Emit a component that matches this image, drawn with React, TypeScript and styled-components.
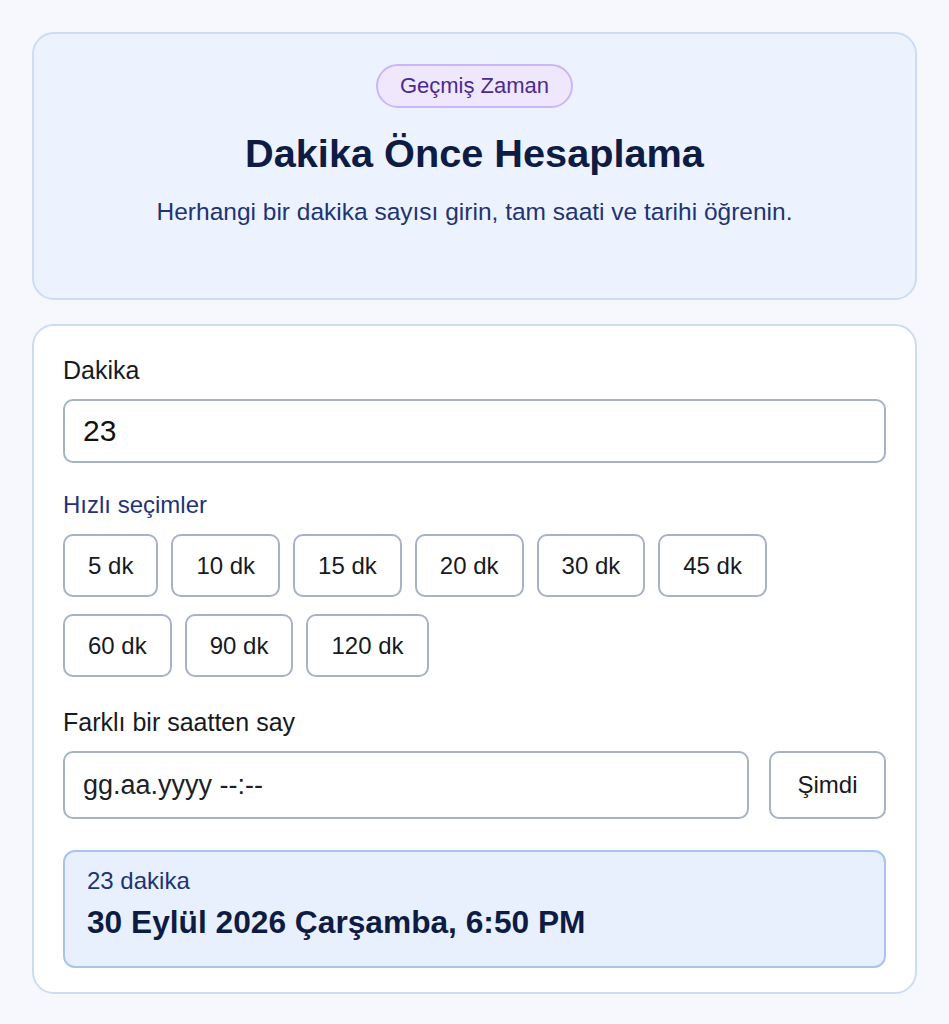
import React, { useState } from "react"
import styled, { createGlobalStyle } from "styled-components"

const GlobalStyle = createGlobalStyle`
    * {
        box-sizing: border-box;
    }
    body {
        margin: 0;
        background: #f6f8fd;
        font-family: "Liberation Sans", Arial, sans-serif;
        color: #111827;
    }
`

const StyledPage = styled.main`
    display: flex;
    flex-direction: column;
    gap: 24px;
    padding: 32px 32px 32px;
`

const StyledHero = styled.section`
    display: flex;
    flex-direction: column;
    align-items: center;
    background: #edf3fe;
    border: 2px solid #cddcf3;
    border-radius: 22px;
    padding: 30px 32px 70px;
    text-align: center;
`

const StyledBadge = styled.span`
    display: inline-flex;
    align-items: center;
    height: 44px;
    padding: 0 22px;
    border-radius: 999px;
    background: #efe8fd;
    border: 2px solid #cbb6f9;
    color: #4c2a92;
    font-size: 22px;
`

const StyledTitle = styled.h1`
    margin: 21px 0 0;
    font-size: 39.7px;
    line-height: 48px;
    font-weight: 700;
    color: #0e1c44;
`

const StyledSubtitle = styled.p`
    margin: 19px 0 0;
    font-size: 24.5px;
    line-height: 32px;
    color: #1f3376;
`

const StyledCard = styled.section`
    display: flex;
    flex-direction: column;
    background: #ffffff;
    border: 2px solid #cddcf3;
    border-radius: 22px;
    padding: 27px 29px 24px;
`

const StyledLabel = styled.label<{ $accent?: boolean }>`
    display: block;
    font-size: ${({ $accent }) => ($accent ? "24px" : "25px")};
    line-height: 34px;
    color: ${({ $accent }) => ($accent ? "#1f3376" : "#161a22")};
    margin-bottom: 12px;
`

const StyledInput = styled.input<{ $large?: boolean }>`
    width: 100%;
    height: ${({ $large }) => ($large ? "68px" : "64px")};
    border: 2px solid #a7b1c7;
    border-radius: 10px;
    padding: 0 18px;
    font-family: "Liberation Sans", Arial, sans-serif;
    font-size: ${({ $large }) => ($large ? "27px" : "30px")};
    color: #111;
    background: #fff;
    outline: none;
    &::placeholder {
        color: #1c1f26;
        opacity: 1;
    }
`

const StyledSection = styled.div<{ $gap: number }>`
    margin-top: ${({ $gap }) => $gap}px;
`

const StyledChips = styled.div`
    display: flex;
    flex-wrap: wrap;
    column-gap: 13px;
    row-gap: 17px;
    max-width: 760px;
`

const StyledChip = styled.button`
    height: 63px;
    padding: 0 23px;
    border: 2px solid #a7b1c7;
    border-radius: 10px;
    background: #fff;
    font-family: "Liberation Sans", Arial, sans-serif;
    font-size: 24px;
    color: #161a22;
    cursor: pointer;
`

const StyledRow = styled.div`
    display: flex;
    gap: 20px;
`

const StyledNowButton = styled(StyledChip)`
    height: 68px;
    flex: 0 0 117px;
    padding: 0;
`

const StyledResult = styled.div`
    margin-top: 31px;
    background: #e8f0fd;
    border: 2px solid #a9c3ef;
    border-radius: 12px;
    padding: 15px 22px 25px;
`

const StyledResultLabel = styled.div`
    font-size: 24px;
    line-height: 28px;
    color: #1f3376;
`

const StyledResultValue = styled.div`
    margin-top: 8px;
    font-size: 31.7px;
    line-height: 38px;
    font-weight: 700;
    color: #0e1c44;
`

const presets = [5, 10, 15, 20, 30, 45, 60, 90, 120]

const App: React.FC = () => {
    const [minutes, setMinutes] = useState("23")

    return (
        <>
            <GlobalStyle />
            <StyledPage>
                <StyledHero>
                    <StyledBadge>Geçmiş Zaman</StyledBadge>
                    <StyledTitle>Dakika Önce Hesaplama</StyledTitle>
                    <StyledSubtitle>Herhangi bir dakika sayısı girin, tam saati ve tarihi öğrenin.</StyledSubtitle>
                </StyledHero>
                <StyledCard>
                    <StyledLabel htmlFor="minutes">Dakika</StyledLabel>
                    <StyledInput id="minutes" value={minutes} onChange={e => setMinutes(e.target.value)} />
                    <StyledSection $gap={25}>
                        <StyledLabel $accent>Hızlı seçimler</StyledLabel>
                        <StyledChips>
                            {presets.map(p => (
                                <StyledChip key={p} onClick={() => setMinutes(String(p))}>{p} dk</StyledChip>
                            ))}
                        </StyledChips>
                    </StyledSection>
                    <StyledSection $gap={28}>
                        <StyledLabel htmlFor="from">Farklı bir saatten say</StyledLabel>
                        <StyledRow>
                            <StyledInput id="from" $large placeholder="gg.aa.yyyy --:--" />
                            <StyledNowButton>Şimdi</StyledNowButton>
                        </StyledRow>
                    </StyledSection>
                    <StyledResult>
                        <StyledResultLabel>{minutes} dakika</StyledResultLabel>
                        <StyledResultValue>30 Eylül 2026 Çarşamba, 6:50 PM</StyledResultValue>
                    </StyledResult>
                </StyledCard>
            </StyledPage>
        </>
    )
}

export default App
